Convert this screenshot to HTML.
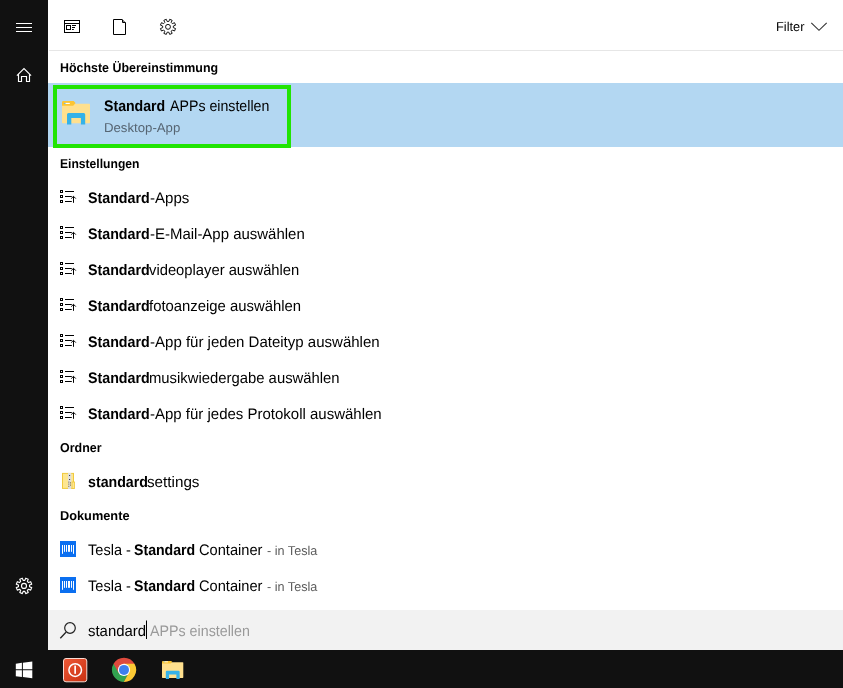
<!DOCTYPE html>
<html><head><meta charset="utf-8">
<style>
*{box-sizing:border-box;margin:0;padding:0}
html,body{width:843px;height:688px;overflow:hidden;background:#fff;font-family:"Liberation Sans",sans-serif;color:#000}
.a{position:absolute}
.t{position:absolute;white-space:pre;line-height:20px;height:20px;transform-origin:0 0;text-rendering:geometricPrecision}
#side{left:0;top:0;width:48px;height:650px;background:#111}
#task{left:0;top:650px;width:843px;height:38px;background:#111}
#topline{left:49px;top:50px;width:794px;height:1px;background:#e6e6e6}
#hl{left:48px;top:83px;width:795px;height:64px;background:#b3d7f2}
#green{left:53px;top:85px;width:237.5px;height:63px;border:4px solid #22e404}
#search{left:48px;top:610px;width:795px;height:40px;background:#f2f2f2}
svg{position:absolute;left:0;top:0}
</style></head><body>
<div id="side" class="a"></div>
<div id="topline" class="a"></div>
<div id="hl" class="a"></div>
<div id="green" class="a"></div>
<div id="search" class="a"></div>
<div id="task" class="a"></div>
<div class="a" style="left:0;top:0;width:843px;height:688px;will-change:transform">
<span class="t" style="left:776.41px;top:17.00px;font-size:12.9px;transform:scaleX(0.9927);color:#000">Filter</span>
<span class="t" style="left:59.66px;top:58.00px;font-size:12.9px;font-weight:bold;transform:scaleX(0.9639);color:#000">Höchste Übereinstimmung</span>
<span class="t" style="left:103.74px;top:97.00px;font-size:15.3px;font-weight:bold;transform:scaleX(0.9236);color:#000">Standard</span>
<span class="t" style="left:169.70px;top:97.00px;font-size:15.3px;transform:scaleX(0.9272);color:#000">APPs einstellen</span>
<span class="t" style="left:103.78px;top:118.00px;font-size:12.9px;transform:scaleX(1.0233);color:#566573">Desktop-App</span>
<span class="t" style="left:59.68px;top:154.00px;font-size:12.9px;font-weight:bold;transform:scaleX(0.9400);color:#000">Einstellungen</span>
<span class="t" style="left:88.13px;top:189.00px;font-size:15.3px;font-weight:bold;transform:scaleX(0.9313);color:#000">Standard</span>
<span class="t" style="left:149.59px;top:189.00px;font-size:15.3px;transform:scaleX(0.9832);color:#000">-Apps</span>
<span class="t" style="left:88.13px;top:225.00px;font-size:15.3px;font-weight:bold;transform:scaleX(0.9313);color:#000">Standard</span>
<span class="t" style="left:149.59px;top:225.00px;font-size:15.3px;transform:scaleX(0.9783);color:#000">-E-Mail-App auswählen</span>
<span class="t" style="left:88.13px;top:261.00px;font-size:15.3px;font-weight:bold;transform:scaleX(0.9313);color:#000">Standard</span>
<span class="t" style="left:149.48px;top:261.00px;font-size:15.3px;transform:scaleX(0.9657);color:#000">videoplayer auswählen</span>
<span class="t" style="left:88.13px;top:297.00px;font-size:15.3px;font-weight:bold;transform:scaleX(0.9313);color:#000">Standard</span>
<span class="t" style="left:149.36px;top:297.00px;font-size:15.3px;transform:scaleX(0.9720);color:#000">fotoanzeige auswählen</span>
<span class="t" style="left:88.13px;top:333.00px;font-size:15.3px;font-weight:bold;transform:scaleX(0.9313);color:#000">Standard</span>
<span class="t" style="left:149.59px;top:333.00px;font-size:15.3px;transform:scaleX(0.9821);color:#000">-App für jeden Dateityp auswählen</span>
<span class="t" style="left:88.13px;top:369.00px;font-size:15.3px;font-weight:bold;transform:scaleX(0.9313);color:#000">Standard</span>
<span class="t" style="left:148.63px;top:369.00px;font-size:15.3px;transform:scaleX(0.9703);color:#000">musikwiedergabe auswählen</span>
<span class="t" style="left:88.13px;top:405.00px;font-size:15.3px;font-weight:bold;transform:scaleX(0.9313);color:#000">Standard</span>
<span class="t" style="left:149.59px;top:405.00px;font-size:15.3px;transform:scaleX(0.9802);color:#000">-App für jedes Protokoll auswählen</span>
<span class="t" style="left:60.02px;top:438.00px;font-size:12.9px;font-weight:bold;transform:scaleX(0.9657);color:#000">Ordner</span>
<span class="t" style="left:87.64px;top:473.00px;font-size:15.3px;font-weight:bold;transform:scaleX(0.9283);color:#000">standard</span>
<span class="t" style="left:147.10px;top:473.00px;font-size:15.3px;transform:scaleX(0.9956);color:#000">settings</span>
<span class="t" style="left:59.63px;top:506.00px;font-size:12.9px;font-weight:bold;transform:scaleX(0.9902);color:#000">Dokumente</span>
<span class="t" style="left:88.14px;top:541.00px;font-size:15.3px;transform:scaleX(0.9523);color:#000">Tesla -</span>
<span class="t" style="left:134.24px;top:541.00px;font-size:15.3px;font-weight:bold;transform:scaleX(0.9236);color:#000">Standard</span>
<span class="t" style="left:199.38px;top:541.00px;font-size:15.3px;transform:scaleX(0.9560);color:#000">Container</span>
<span class="t" style="left:267.01px;top:541.00px;font-size:12.9px;transform:scaleX(0.9808);color:#5c5c5c">- in Tesla</span>
<span class="t" style="left:88.14px;top:577.00px;font-size:15.3px;transform:scaleX(0.9523);color:#000">Tesla -</span>
<span class="t" style="left:134.24px;top:577.00px;font-size:15.3px;font-weight:bold;transform:scaleX(0.9236);color:#000">Standard</span>
<span class="t" style="left:199.38px;top:577.00px;font-size:15.3px;transform:scaleX(0.9560);color:#000">Container</span>
<span class="t" style="left:267.01px;top:577.00px;font-size:12.9px;transform:scaleX(0.9808);color:#5c5c5c">- in Tesla</span>
<span class="t" style="left:87.61px;top:622.00px;font-size:15.3px;transform:scaleX(0.9759);color:#000">standard</span>
<span class="t" style="left:150.40px;top:622.00px;font-size:15.3px;transform:scaleX(0.9319);color:#9a9a9a">APPs einstellen</span>
</div>
<svg width="843" height="688" viewBox="0 0 843 688">
<rect x="16" y="23" width="16" height="1" fill="#fff"/>
<rect x="16" y="27" width="16" height="1" fill="#fff"/>
<rect x="16" y="31" width="16" height="1" fill="#fff"/>
<path d="M16.9,75.6 L24,68.6 L31.1,75.6 M18.5,74.4 L18.5,81.5 L21.5,81.5 L21.5,76.5 L26.5,76.5 L26.5,81.5 L29.5,81.5 L29.5,74.4" fill="none" stroke="#fff" stroke-width="1.15"/>
<path d="M24.83,580.36 L25.72,578.19 L28.23,579.23 L27.33,581.40 L28.50,582.57 L30.67,581.67 L31.71,584.18 L29.54,585.07 L29.54,586.73 L31.71,587.62 L30.67,590.13 L28.50,589.23 L27.33,590.40 L28.23,592.57 L25.72,593.61 L24.83,591.44 L23.17,591.44 L22.28,593.61 L19.77,592.57 L20.67,590.40 L19.50,589.23 L17.33,590.13 L16.29,587.62 L18.46,586.73 L18.46,585.07 L16.29,584.18 L17.33,581.67 L19.50,582.57 L20.67,581.40 L19.77,579.23 L22.28,578.19 L23.17,580.36Z" fill="none" stroke="#fff" stroke-width="1.15" stroke-linejoin="round"/><circle cx="24" cy="585.9" r="2.5" fill="none" stroke="#fff" stroke-width="1.15"/>
<rect x="64.5" y="20.5" width="15" height="12" fill="none" stroke="#000"/><rect x="64" y="23" width="16" height="1" fill="#000"/><rect x="66.5" y="25.5" width="4" height="4" fill="none" stroke="#000"/><rect x="72" y="25" width="4" height="1" fill="#000"/><rect x="72" y="27" width="3" height="1" fill="#000"/><rect x="72" y="29" width="1.8" height="1" fill="#000"/>
<path d="M113.5,19.5 L122,19.5 L125.5,23 L125.5,34.5 L113.5,34.5Z M122.5,19.5 L122.5,22.5 L125.5,22.5" fill="none" stroke="#000" stroke-width="1"/>
<path d="M168.80,21.51 L169.69,19.29 L172.15,20.31 L171.21,22.51 L172.34,23.64 L174.54,22.70 L175.56,25.16 L173.34,26.05 L173.34,27.65 L175.56,28.54 L174.54,31.00 L172.34,30.06 L171.21,31.19 L172.15,33.39 L169.69,34.41 L168.80,32.19 L167.20,32.19 L166.31,34.41 L163.85,33.39 L164.79,31.19 L163.66,30.06 L161.46,31.00 L160.44,28.54 L162.66,27.65 L162.66,26.05 L160.44,25.16 L161.46,22.70 L163.66,23.64 L164.79,22.51 L163.85,20.31 L166.31,19.29 L167.20,21.51Z" fill="none" stroke="#111" stroke-width="1.0" stroke-linejoin="round"/><circle cx="168" cy="26.85" r="2.45" fill="none" stroke="#111" stroke-width="1.0"/>
<path d="M811.3,22.8 L819,30.3 L826.7,22.8" fill="none" stroke="#333" stroke-width="1.1"/>
<rect x="62.0" y="103.8" width="28.0" height="19.5" rx="0.8" fill="#ffe08e"/><path d="M62.0,102.2 Q62.0,101.0 63.2,101.0 L73.7,101.0 L75.6,103.1 L73.2,105.7 L62.0,105.7Z" fill="#fcc533"/><rect x="64.3" y="102.9" width="5.5" height="1.1" fill="#fff"/><rect x="64.3" y="102.9" width="1.1" height="1.1" fill="#39a9e0"/><path d="M67.0,124.5 L67.0,114.4 Q67.0,112.9 68.5,112.9 L83.7,112.9 Q85.2,112.9 85.2,114.4 L85.2,124.5 L80.9,124.5 L80.9,118.1 L71.3,118.1 L71.3,124.5Z" fill="#35b2e8"/>
<rect x="60.5" y="190.5" width="2" height="2" fill="none" stroke="#000" stroke-width="1"/><rect x="65" y="191" width="9" height="1" fill="#000"/><rect x="60.5" y="195.5" width="2" height="2" fill="none" stroke="#000" stroke-width="1"/><rect x="65" y="196" width="6.799999999999997" height="1" fill="#000"/><rect x="60.5" y="200.5" width="2" height="2" fill="none" stroke="#000" stroke-width="1"/><rect x="65" y="201" width="6.799999999999997" height="1" fill="#000"/><rect x="73" y="196.5" width="1" height="6.3" fill="#000"/><path d="M71.2,198.6 L73.5,196.3 L75.8,198.6" fill="none" stroke="#000" stroke-width="1"/>
<rect x="60.5" y="226.5" width="2" height="2" fill="none" stroke="#000" stroke-width="1"/><rect x="65" y="227" width="9" height="1" fill="#000"/><rect x="60.5" y="231.5" width="2" height="2" fill="none" stroke="#000" stroke-width="1"/><rect x="65" y="232" width="6.799999999999997" height="1" fill="#000"/><rect x="60.5" y="236.5" width="2" height="2" fill="none" stroke="#000" stroke-width="1"/><rect x="65" y="237" width="6.799999999999997" height="1" fill="#000"/><rect x="73" y="232.5" width="1" height="6.3" fill="#000"/><path d="M71.2,234.6 L73.5,232.3 L75.8,234.6" fill="none" stroke="#000" stroke-width="1"/>
<rect x="60.5" y="262.5" width="2" height="2" fill="none" stroke="#000" stroke-width="1"/><rect x="65" y="263" width="9" height="1" fill="#000"/><rect x="60.5" y="267.5" width="2" height="2" fill="none" stroke="#000" stroke-width="1"/><rect x="65" y="268" width="6.799999999999997" height="1" fill="#000"/><rect x="60.5" y="272.5" width="2" height="2" fill="none" stroke="#000" stroke-width="1"/><rect x="65" y="273" width="6.799999999999997" height="1" fill="#000"/><rect x="73" y="268.5" width="1" height="6.3" fill="#000"/><path d="M71.2,270.6 L73.5,268.3 L75.8,270.6" fill="none" stroke="#000" stroke-width="1"/>
<rect x="60.5" y="298.5" width="2" height="2" fill="none" stroke="#000" stroke-width="1"/><rect x="65" y="299" width="9" height="1" fill="#000"/><rect x="60.5" y="303.5" width="2" height="2" fill="none" stroke="#000" stroke-width="1"/><rect x="65" y="304" width="6.799999999999997" height="1" fill="#000"/><rect x="60.5" y="308.5" width="2" height="2" fill="none" stroke="#000" stroke-width="1"/><rect x="65" y="309" width="6.799999999999997" height="1" fill="#000"/><rect x="73" y="304.5" width="1" height="6.3" fill="#000"/><path d="M71.2,306.6 L73.5,304.3 L75.8,306.6" fill="none" stroke="#000" stroke-width="1"/>
<rect x="60.5" y="334.5" width="2" height="2" fill="none" stroke="#000" stroke-width="1"/><rect x="65" y="335" width="9" height="1" fill="#000"/><rect x="60.5" y="339.5" width="2" height="2" fill="none" stroke="#000" stroke-width="1"/><rect x="65" y="340" width="6.799999999999997" height="1" fill="#000"/><rect x="60.5" y="344.5" width="2" height="2" fill="none" stroke="#000" stroke-width="1"/><rect x="65" y="345" width="6.799999999999997" height="1" fill="#000"/><rect x="73" y="340.5" width="1" height="6.3" fill="#000"/><path d="M71.2,342.6 L73.5,340.3 L75.8,342.6" fill="none" stroke="#000" stroke-width="1"/>
<rect x="60.5" y="370.5" width="2" height="2" fill="none" stroke="#000" stroke-width="1"/><rect x="65" y="371" width="9" height="1" fill="#000"/><rect x="60.5" y="375.5" width="2" height="2" fill="none" stroke="#000" stroke-width="1"/><rect x="65" y="376" width="6.799999999999997" height="1" fill="#000"/><rect x="60.5" y="380.5" width="2" height="2" fill="none" stroke="#000" stroke-width="1"/><rect x="65" y="381" width="6.799999999999997" height="1" fill="#000"/><rect x="73" y="376.5" width="1" height="6.3" fill="#000"/><path d="M71.2,378.6 L73.5,376.3 L75.8,378.6" fill="none" stroke="#000" stroke-width="1"/>
<rect x="60.5" y="406.5" width="2" height="2" fill="none" stroke="#000" stroke-width="1"/><rect x="65" y="407" width="9" height="1" fill="#000"/><rect x="60.5" y="411.5" width="2" height="2" fill="none" stroke="#000" stroke-width="1"/><rect x="65" y="412" width="6.799999999999997" height="1" fill="#000"/><rect x="60.5" y="416.5" width="2" height="2" fill="none" stroke="#000" stroke-width="1"/><rect x="65" y="417" width="6.799999999999997" height="1" fill="#000"/><rect x="73" y="412.5" width="1" height="6.3" fill="#000"/><path d="M71.2,414.6 L73.5,412.3 L75.8,414.6" fill="none" stroke="#000" stroke-width="1"/>
<rect x="62.5" y="473.4" width="11" height="15" fill="#fde690" stroke="#f0c93c" stroke-width="1"/><rect x="72" y="482" width="2.6" height="6.4" fill="#fde690" stroke="#f0c93c" stroke-width="0.8"/><rect x="68" y="473" width="3.2" height="16" fill="#dedede"/><rect x="69.1" y="475" width="1" height="1" fill="#333"/><rect x="69.1" y="479" width="1" height="1" fill="#333"/><rect x="68.3" y="481.6" width="1" height="1" fill="#7a6520"/><rect x="70" y="482.4" width="1" height="1" fill="#7a6520"/><rect x="68.3" y="483.6" width="1" height="1" fill="#7a6520"/><rect x="70" y="484.6" width="1" height="1" fill="#7a6520"/><rect x="68.3" y="485.8" width="1" height="1" fill="#7a6520"/>
<rect x="60" y="541" width="16" height="16" fill="#0b6ff0"/><rect x="62" y="545" width="1" height="8.8" fill="#fff"/><rect x="64" y="545" width="1" height="6.8" fill="#fff"/><rect x="66" y="545" width="1" height="6.8" fill="#fff"/><rect x="68" y="545" width="2" height="6.8" fill="#fff"/><rect x="71" y="545" width="1" height="6.8" fill="#fff"/><rect x="73" y="545" width="1" height="8.8" fill="#fff"/>
<rect x="60" y="577" width="16" height="16" fill="#0b6ff0"/><rect x="62" y="581" width="1" height="8.8" fill="#fff"/><rect x="64" y="581" width="1" height="6.8" fill="#fff"/><rect x="66" y="581" width="1" height="6.8" fill="#fff"/><rect x="68" y="581" width="2" height="6.8" fill="#fff"/><rect x="71" y="581" width="1" height="6.8" fill="#fff"/><rect x="73" y="581" width="1" height="8.8" fill="#fff"/>
<circle cx="70" cy="628" r="5.3" fill="none" stroke="#222" stroke-width="1.2"/><path d="M66,632.3 L60.3,638.2" stroke="#222" stroke-width="1.3" fill="none"/>
<rect x="146" y="620.5" width="1" height="18.5" fill="#000"/>
<path d="M15.8,663.7 L21.9,662.8 L21.9,669.3 L15.8,669.3Z M22.9,662.7 L32.3,661.4 L32.3,669.3 L22.9,669.3Z M15.8,670.2 L21.9,670.2 L21.9,677 L15.8,676.2Z M22.9,670.2 L32.3,670.2 L32.3,678.3 L22.9,677.1Z" fill="#fff"/>
<defs><linearGradient id="pg" x1="0" y1="0" x2="1" y2="1"><stop offset="0" stop-color="#ee5a38"/><stop offset="1" stop-color="#c93010"/></linearGradient></defs><rect x="63.5" y="658.5" width="23.3" height="23.3" rx="2.5" fill="url(#pg)" stroke="#f9ddd5" stroke-width="1"/><circle cx="75.2" cy="670.1" r="6.3" fill="none" stroke="#fff" stroke-width="1.5"/><rect x="74.3" y="665.6" width="1.7" height="8.2" fill="#fff"/>
<circle cx="124.0" cy="669.9" r="11.5" fill="#dd4b3e"/><path d="M113.52,663.85 A12.1,12.1 0 0 1 134.48,663.85 L129.28,666.85 L124.0,669.9 Z" fill="#de4a3d"/><path d="M134.48,663.85 A12.1,12.1 0 0 1 123.79,682.00 L127.50,674.90 L124.0,669.9 L124.00,663.80 L134.48,663.80Z" fill="#fcc934"/><path d="M123.79,682.00 A12.1,12.1 0 0 1 113.52,663.85 L118.72,672.95 L124.0,669.9 L127.50,674.90 Z" fill="#32a350"/><circle cx="124.0" cy="669.9" r="6.1" fill="#fff"/><circle cx="124.0" cy="669.9" r="5" fill="#3e7fee"/>
<rect x="162.0" y="662.1255319148936" width="21.3" height="15.85531914893617" rx="0.6085714285714287" fill="#ffe08e"/><path d="M162.0,661.8191489361702 Q162.0,660.9 162.91285714285715,660.9 L170.90035714285713,660.9 L172.34571428571428,661.8191489361702 L170.52,663.5808510638298 L162.0,663.5808510638298Z" fill="#fcc533"/><rect x="163.74964285714285" y="661.4361702127659" width="4.183928571428572" height="0.8425531914893618" fill="#fff"/><rect x="163.74964285714285" y="661.4361702127659" width="0.8367857142857145" height="0.8425531914893618" fill="#39a9e0"/><path d="M165.80357142857142,678.9 L165.80357142857142,671.8531914893617 Q165.80357142857142,670.704255319149 166.94464285714287,670.704255319149 L178.5075,670.704255319149 Q179.64857142857142,670.704255319149 179.64857142857142,671.8531914893617 L179.64857142857142,678.9 L176.3775,678.9 L176.3775,674.3808510638298 L169.07464285714286,674.3808510638298 L169.07464285714286,678.9Z" fill="#35b2e8"/>
</svg>
</body></html>
